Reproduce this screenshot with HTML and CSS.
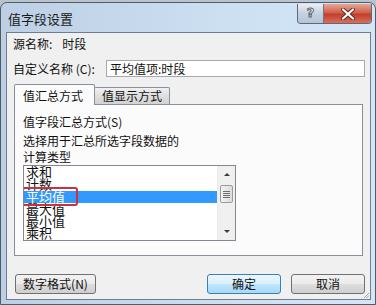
FILE: index.html
```html
<!DOCTYPE html>
<html>
<head>
  <title>值字段设置</title>
  <meta charset="utf-8">
  <link rel="stylesheet" href="styles.css">
</head>
<body>
<div class="window">
  <div class="titlebar">
    <span class="title">值字段设置</span>
    <div class="caption-btns">
      <span class="btn-help">?</span>
      <span class="btn-close">
        <svg width="16" height="12" viewBox="0 0 16 12">
          <path d="M3 1.5 L13 10.5 M13 1.5 L3 10.5" stroke="#5a2a22" stroke-width="4" stroke-linecap="round"/>
          <path d="M3 1.5 L13 10.5 M13 1.5 L3 10.5" stroke="#fff" stroke-width="2.2" stroke-linecap="round"/>
        </svg>
      </span>
    </div>
  </div>

  <div class="client">
    <div class="row source">源名称:<span class="value">时段</span></div>
    <div class="row custom">
      <label for="customName">自定义名称 (C):</label>
      <input type="text" id="customName" value="平均值项:时段">
    </div>

    <div class="tabs">
      <span class="tab active">值汇总方式</span>
      <span class="tab">值显示方式</span>
    </div>
    <div class="panel">
      <div class="group-title">值字段汇总方式(S)</div>
      <p class="hint">选择用于汇总所选字段数据的<br>计算类型</p>
      <div class="listbox">
        <ul class="items">
          <li>求和</li>
          <li>计数</li>
          <li class="selected"><span class="mark">平均值</span></li>
          <li>最大值</li>
          <li>最小值</li>
          <li>乘积</li>
        </ul>
        <div class="scrollbar">
          <span class="arrow up"></span>
          <span class="thumb"><i></i><i></i><i></i><i></i></span>
          <span class="arrow down"></span>
        </div>
      </div>
    </div>

    <div class="footer">
      <button class="btn wide">数字格式(N)</button>
      <div class="spacer"></div>
      <button class="btn default">确定</button>
      <button class="btn">取消</button>
    </div>

    <svg class="grip" width="7" height="7" viewBox="0 0 7 7">
      <path d="M6 1 L1 6 M6 3.5 L3.5 6" stroke="#9aa3ad" stroke-width="1"/>
    </svg>
  </div>
</div>
</body>
</html>
```

FILE: styles.css
```css
body {
  margin: 0;
  background: #b9c3cc;
  font-family: "Noto Sans CJK SC", "Liberation Sans", sans-serif;
  font-size: 12px;
  color: #111;
}

.window {
  width: 376px;
  height: 303px;
  margin-top: 2px;
  box-sizing: border-box;
  border: 1px solid #4f5d6b;
  border-radius: 7px 7px 0 0;
  background: linear-gradient(to right, #bccfe4, #cde0f2 60%, #d4e6f6);
  display: flex;
  flex-direction: column;
}

.titlebar {
  height: 29px;
  display: flex;
  align-items: flex-start;
  padding-left: 7px;
}

.title {
  margin-top: 9px;
  font-size: 13px;
  line-height: 14px;
  color: #1a1a1a;
}

.caption-btns {
  margin-left: auto;
  margin-right: 3px;
  margin-top: 1px;
  display: flex;
  height: 19px;
  border: 1px solid #5b6a7a;
  border-top: none;
  border-radius: 0 0 4px 4px;
  overflow: hidden;
}

.btn-help {
  width: 25px;
  background: linear-gradient(#e9eef4, #c5d1de 50%, #b6c4d3);
  border-right: 1px solid #6a7886;
  text-align: center;
  font-family: "DejaVu Sans", sans-serif;
  font-weight: bold;
  font-size: 13px;
  line-height: 18px;
  color: #f4f6f8;
  -webkit-text-stroke: 1px #5d6670;
  border-bottom-left-radius: 4px;
}

.btn-close {
  width: 47px;
  background: linear-gradient(#e7a896, #d0604c 45%, #c23e2c 55%, #d8705a);
  display: flex;
  align-items: center;
  justify-content: center;
}

.client {
  flex: 1;
  position: relative;
  margin: 0 4px 4px 5px;
  border: 1px solid #6f7e8d;
  background: #f0f0f0;
  padding: 3px 5px 0 6px;
}

.row {
  line-height: 16px;
}

.source .value {
  margin-left: 10px;
}

.custom {
  display: flex;
  align-items: center;
  margin-top: 8px;
  height: 17px;
}

.custom label {
  width: 93px;
}

.custom input {
  width: 259px;
  height: 17px;
  box-sizing: border-box;
  border: 1px solid #a4a9b0;
  padding: 0 3px;
  font-family: inherit;
  font-size: 12px;
  color: #111;
  background: #fff;
  outline: none;
}

.tabs {
  display: flex;
  align-items: flex-end;
  margin-top: 7px;
  margin-left: 1px;
  height: 20px;
  position: relative;
  z-index: 1;
}

.tab {
  height: 16px;
  padding: 0 7px 0 7px;
  line-height: 16px;
  border: 1px solid #8a8f98;
  border-bottom: none;
  background: linear-gradient(#f1f1f1, #dedede 50%, #d2d2d2);
  border-radius: 2px 2px 0 0;
  margin-left: -1px;
}

.tab.active {
  height: 20px;
  line-height: 22px;
  padding: 0 11px 0 8px;
  background: #fbfbfb;
  margin-left: 0;
  position: relative;
  z-index: 2;
  margin-bottom: -1px;
}

.panel {
  width: 349px;
  height: 152px;
  box-sizing: border-box;
  margin-left: 1px;
  border: 1px solid #8a8f98;
  background: #fbfbfb;
  padding: 9px 0 0 8px;
}

.group-title {
  line-height: 16px;
}

.hint {
  margin: 3px 0 0;
  line-height: 16px;
}

.listbox {
  width: 213px;
  height: 76px;
  box-sizing: border-box;
  border: 1px solid #828790;
  background: #fff;
  display: flex;
}

.items {
  flex: 1;
  list-style: none;
  margin: 0;
  padding: 0;
  overflow: hidden;
}

.items li {
  height: 12px;
  line-height: 12px;
  font-size: 13px;
  padding-left: 2px;
  white-space: nowrap;
}

.items li.selected {
  background: #3399ff;
  color: #fff;
  margin-top: 1px;
}

.mark {
  display: inline-block;
  height: 12px;
  line-height: 12px;
  position: relative;
}

.mark::after {
  content: "";
  position: absolute;
  left: -4px;
  right: -13px;
  top: -4px;
  bottom: -3px;
  border: 2px solid #c8323a;
  border-radius: 3px;
}

.scrollbar {
  width: 17px;
  background: #f0f0f0;
  border-left: 1px solid #ececec;
  display: flex;
  flex-direction: column;
  align-items: center;
}

.arrow {
  width: 0;
  height: 0;
  border-left: 3px solid transparent;
  border-right: 3px solid transparent;
}

.arrow.up {
  margin-top: 7px;
  border-bottom: 3px solid #3b3b3b;
}

.arrow.down {
  margin-top: auto;
  margin-bottom: 7px;
  border-top: 3px solid #3b3b3b;
}

.thumb {
  margin-top: 9px;
  width: 13px;
  height: 18px;
  box-sizing: border-box;
  border: 1px solid #9b9b9b;
  border-radius: 2px;
  background: linear-gradient(to right, #f3f3f3, #dcdcdc);
  display: flex;
  flex-direction: column;
  align-items: center;
  justify-content: center;
  gap: 1px;
}

.thumb i {
  display: block;
  width: 7px;
  height: 1px;
  background: #6e6e6e;
}

.footer {
  display: flex;
  margin-top: 18px;
  gap: 10px;
  padding-left: 2px;
}

.spacer {
  flex: 1;
}

.btn {
  width: 74px;
  height: 20px;
  border: 1px solid #707070;
  border-radius: 3px;
  background: linear-gradient(#f2f2f2, #ebebeb 50%, #dddddd 51%, #cfcfcf);
  font-family: inherit;
  font-size: 12px;
  line-height: 16px;
  padding: 0;
  color: #111;
}

.btn.wide {
  width: 81px;
}

.btn.default {
  border-color: #3c7fb1;
  background: linear-gradient(#eaf6fd, #d9f0fc 50%, #bee6fd 51%, #a7d9f5);
}

.grip {
  position: absolute;
  right: 0;
  bottom: 0;
}
```
